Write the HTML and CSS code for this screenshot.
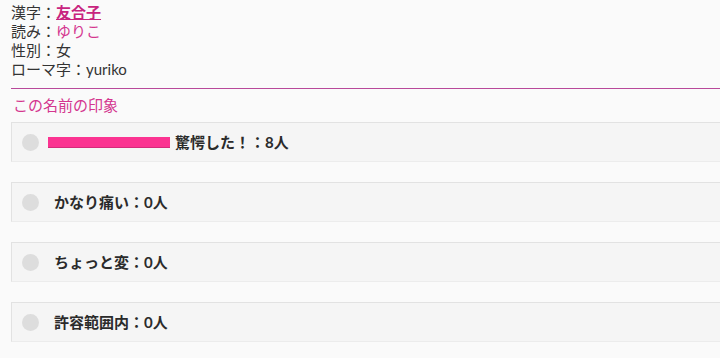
FILE: index.html
```html
<!DOCTYPE html>
<html lang="ja">
<head>
<meta charset="utf-8">
<link rel="stylesheet" href="styles.css">
</head>
<body>
<div class="info">
  <div class="line">漢字：<a class="kanji" href="#">友合子</a></div>
  <div class="line">読み：<span class="pink">ゆりこ</span></div>
  <div class="line">性別：女</div>
  <div class="line">ローマ字：yuriko</div>
</div>
<div class="rule"></div>
<div class="heading">この名前の印象</div>
<div class="cards">
  <div class="card">
    <span class="dot"></span>
    <span class="bar" style="width:122px"></span>
    <span class="label">驚愕した！：8人</span>
  </div>
  <div class="card">
    <span class="dot"></span>
    <span class="bar empty"></span>
    <span class="label">かなり痛い：0人</span>
  </div>
  <div class="card">
    <span class="dot"></span>
    <span class="bar empty"></span>
    <span class="label">ちょっと変：0人</span>
  </div>
  <div class="card">
    <span class="dot"></span>
    <span class="bar empty"></span>
    <span class="label">許容範囲内：0人</span>
  </div>
</div>
</body>
</html>
```
FILE: styles.css
```css
html, body {
  margin: 0;
  padding: 0;
  background: #fafafa;
}
body {
  font-family: Lato, "Noto Sans CJK JP", sans-serif;
  font-size: 15px;
  color: #333;
  overflow: hidden;
}
.info {
  padding: 3px 0 0 11px;
}
.line {
  line-height: 19px;
  height: 19px;
}
.kanji {
  color: #c8247f;
  font-weight: bold;
  text-decoration: underline;
}
.pink {
  color: #d4368f;
}
.rule {
  margin: 9px 0 0 11px;
  border-top: 1px solid #b8489a;
}
.heading {
  margin: 6px 0 0 13px;
  color: #d4368f;
  line-height: 20px;
}
.cards {
  margin-top: 7px;
  padding-left: 11px;
}
.card {
  box-sizing: border-box;
  height: 40px;
  margin-bottom: 20px;
  margin-right: -10px;
  background: #f5f5f5;
  border: 1px solid #e2e2e2;
  border-right: none;
  border-bottom-color: #ececec;
  display: flex;
  align-items: center;
  padding-left: 10px;
}
.dot {
  width: 17px;
  height: 17px;
  border-radius: 50%;
  background: #dddddd;
  margin-right: 9px;
  flex: none;
}
.bar {
  display: inline-block;
  height: 10px;
  background: #fb3391;
  border-bottom: 1px solid #d42a7a;
  margin-right: 5px;
  flex: none;
}
.bar.empty {
  width: 0;
  border: none;
  margin-right: 6px;
}
.label {
  font-weight: bold;
  color: #2b2b2b;
  line-height: 20px;
}
```
